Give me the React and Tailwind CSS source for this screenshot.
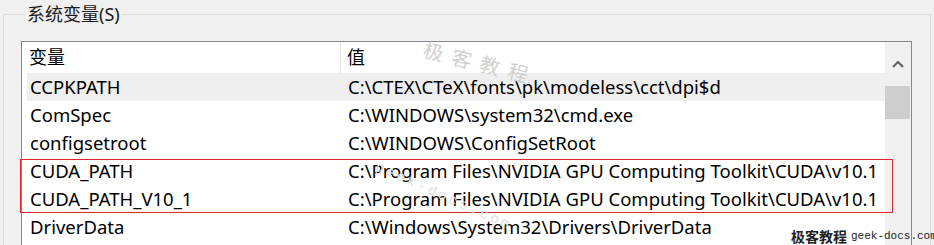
import React from "react";

const rows = [
  { name: "CCPKPATH", value: "C:\\CTEX\\CTeX\\fonts\\pk\\modeless\\cct\\dpi$d", active: true },
  { name: "ComSpec", value: "C:\\WINDOWS\\system32\\cmd.exe" },
  { name: "configsetroot", value: "C:\\WINDOWS\\ConfigSetRoot" },
  { name: "CUDA_PATH", value: "C:\\Program Files\\NVIDIA GPU Computing Toolkit\\CUDA\\v10.1" },
  { name: "CUDA_PATH_V10_1", value: "C:\\Program Files\\NVIDIA GPU Computing Toolkit\\CUDA\\v10.1" },
  { name: "DriverData", value: "C:\\Windows\\System32\\Drivers\\DriverData" },
];

const font = "font-['Noto_Sans','Noto_Sans_CJK_SC',sans-serif]";

export default function App() {
  return (
    <div className={`relative w-[934px] h-[245px] overflow-hidden bg-[#f0f0f0] text-black ${font}`}>
      <fieldset className="ml-[3px] w-[928px] h-[300px] border border-[#dcdcdc] pl-[17px]">
        <legend className="ml-[4px] px-[2px] text-[18px] leading-[28px] text-[#1a1a1a]">
          系统变量(S)
        </legend>

        {/* list view */}
        <div className="mt-[13px] w-[891px] h-[220px] border border-[#828790] bg-white flex">
          <div className="w-[863px] pl-[5px] overflow-hidden">
            <div className="flex h-[31px] items-center text-[18px]">
              <div className="w-[314px] shrink-0 h-full flex items-center pl-[2px] border-r border-[#e5e5e5]">变量</div>
              <div className="pl-[6px]">值</div>
            </div>
            {rows.map((r) => (
              <div
                key={r.name}
                className={`flex h-[28px] items-center text-[18.5px] whitespace-nowrap ${r.active ? "bg-[#efefef]" : ""}`}
              >
                <div className="w-[314px] shrink-0 pl-[3px]">{r.name}</div>
                <div className="pl-[7px]">{r.value}</div>
              </div>
            ))}
          </div>

          {/* scrollbar */}
          <div className="w-[26px] bg-[#f0f0f0] flex flex-col items-center">
            <div className="h-[44px] w-full flex items-center justify-center">
              <svg width="12" height="8" viewBox="0 0 12 8">
                <path d="M1 7 L6 2 L11 7" fill="none" stroke="#606060" strokeWidth="2" />
              </svg>
            </div>
            <div className="w-[25px] self-start h-[33px] bg-[#cdcdcd]" />
          </div>
        </div>
      </fieldset>

      {/* annotation box */}
      <div className="absolute left-[20px] top-[159px] w-[873px] h-[54px] border border-[#e0262b]" />

      {/* watermarks */}
      <div className="absolute left-[424px] top-[34px] rotate-[14deg] origin-left whitespace-nowrap text-[20px] tracking-[9px] text-[#d0d0d0] font-['Noto_Sans_CJK_SC',serif] pointer-events-none">
        极客教程
      </div>
      <div className="absolute left-[376px] top-[156px] rotate-[24deg] origin-left whitespace-nowrap text-[14px] tracking-[3px] text-[#e0e0e0] font-['Liberation_Mono',monospace] pointer-events-none">
        geek-docs.com
      </div>
      <div className="absolute left-[791px] top-[228px] w-max flex items-end gap-[4px] whitespace-nowrap leading-[16px] pointer-events-none">
        <span className="text-[14px] font-bold text-[#222] font-['Noto_Sans_CJK_SC',serif]">极客教程</span>
        <span className="text-[11px] text-[#222] font-['Liberation_Mono',monospace]">geek-docs.com</span>
      </div>
    </div>
  );
}
